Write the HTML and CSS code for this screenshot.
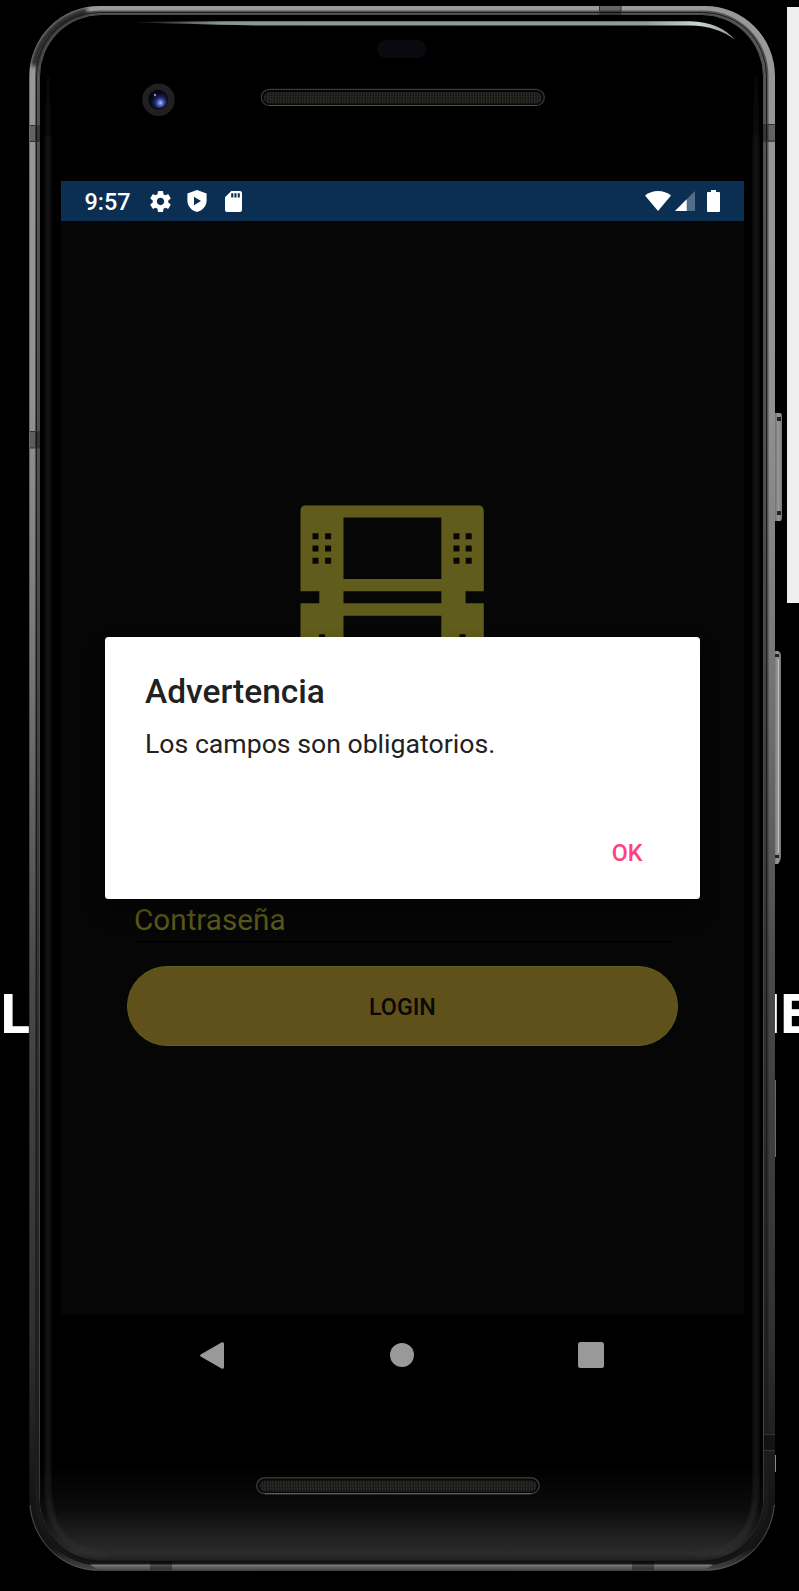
FILE: index.html
```html
<!DOCTYPE html>
<html lang="es">
<head>
<meta charset="utf-8">
<title>Login</title>
<link rel="stylesheet" href="styles.css">
</head>
<body>
<div class="stage">
  <div class="side-panel"></div>
  <span class="backdrop-text backdrop-left">L</span>
  <span class="backdrop-text backdrop-right">IE</span>

  <svg class="hardware" width="799" height="1591" viewBox="0 0 799 1591" aria-hidden="true">
    <defs>
      <linearGradient id="rail" gradientUnits="userSpaceOnUse" x1="0" y1="6" x2="0" y2="1571">
        <stop offset="0" stop-color="#999"/><stop offset=".25" stop-color="#929292"/>
        <stop offset=".42" stop-color="#777"/><stop offset=".62" stop-color="#494949"/>
        <stop offset=".85" stop-color="#303030"/><stop offset=".955" stop-color="#151515"/>
        <stop offset=".985" stop-color="#141414"/><stop offset="1" stop-color="#484848"/>
      </linearGradient>
      <linearGradient id="railInner" gradientUnits="userSpaceOnUse" x1="0" y1="6" x2="0" y2="1571">
        <stop offset="0" stop-color="#555"/><stop offset=".3" stop-color="#505050"/>
        <stop offset=".65" stop-color="#303030"/><stop offset=".95" stop-color="#1a1a1a"/><stop offset="1" stop-color="#111"/>
      </linearGradient>
      <linearGradient id="innerEdge" gradientUnits="userSpaceOnUse" x1="0" y1="6" x2="0" y2="1571">
        <stop offset="0" stop-color="#505050"/><stop offset=".9" stop-color="#444"/>
        <stop offset=".97" stop-color="#2e2e2e"/><stop offset="1" stop-color="#111"/>
      </linearGradient>
      <linearGradient id="glow" gradientUnits="userSpaceOnUse" x1="0" y1="1465" x2="0" y2="1560">
        <stop offset="0" stop-color="#000"/><stop offset=".45" stop-color="#0b0b0b"/>
        <stop offset=".93" stop-color="#2c2c2c"/><stop offset="1" stop-color="#202020"/>
      </linearGradient>
      <linearGradient id="sideGlow" gradientUnits="userSpaceOnUse" x1="0" y1="60" x2="0" y2="1560">
        <stop offset="0" stop-color="#1c1c1c" stop-opacity="0"/><stop offset=".06" stop-color="#1c1c1c"/>
        <stop offset=".93" stop-color="#1c1c1c"/><stop offset="1" stop-color="#303030"/>
      </linearGradient>
      <linearGradient id="shine" x1="0" x2="1">
        <stop offset="0" stop-color="#8b9696" stop-opacity="0"/><stop offset=".15" stop-color="#8b9696"/>
        <stop offset=".85" stop-color="#929b9b"/><stop offset=".94" stop-color="#cdd4d4"/><stop offset="1" stop-color="#8b9696"/>
      </linearGradient>
      <linearGradient id="key" x1="0" x2="1">
        <stop offset="0" stop-color="#666"/><stop offset=".55" stop-color="#989898"/><stop offset="1" stop-color="#777"/>
      </linearGradient>
      <linearGradient id="bottomRail" x1="0" x2="0" y1="0" y2="1">
        <stop offset="0" stop-color="#858585"/><stop offset=".5" stop-color="#5c5c5c"/><stop offset="1" stop-color="#474747"/>
      </linearGradient>
      <pattern id="mesh" width="2.670" height="3" patternUnits="userSpaceOnUse">
        <rect width="2.670" height="3" fill="#131210"/><rect width="1.300" height="3" fill="#2b2926"/><rect width="1.300" height="1.300" fill="#35322c"/>
      </pattern>
      <radialGradient id="lens" cx=".62" cy=".68" r=".6">
        <stop offset="0" stop-color="#b9c2ff"/><stop offset=".25" stop-color="#5b68c4"/>
        <stop offset=".55" stop-color="#1c2360"/><stop offset="1" stop-color="#06070f"/>
      </radialGradient>
      <filter id="soft" filterUnits="userSpaceOnUse" x="0" y="0" width="799" height="1591"><feGaussianBlur stdDeviation="2"/></filter>
      <clipPath id="face"><rect x="40" y="15.500" width="723" height="1545" rx="61"/></clipPath>
    </defs>

    <!-- side keys -->
    <path d="M774 413h6q2 0 2 3v102q0 3-2 3h-6z" fill="url(#key)"/>
    <path d="M777 417h4v4h-4zM777 511h4v4h-4z" fill="#222"/>
    <path d="M773 651h5q3 1 3 5v199q0 6-3 9h-5z" fill="url(#key)"/>
    <path d="M774 654h5v3h-5zM774 855h5v3h-5z" fill="#222"/>
    <path d="M778.500 659v194" stroke="#bbb"/>
    <path d="M775.300 1080v77M775.500 1455v17" stroke="#888" stroke-width="1"/>

    <!-- metal frame -->
    <rect x="29.300" y="6" width="745.700" height="1564.700" rx="70" fill="url(#rail)"/>
    <rect x="35" y="10.500" width="733.500" height="1555" rx="65" fill="url(#railInner)"/>
    <path d="M34 66C38 40 57 18 87 11" fill="none" stroke="#161616" stroke-width="6" filter="url(#soft)"/>
    <rect x="36.500" y="12.500" width="730" height="1551" rx="63" fill="none" stroke="#1c1c1c"/>
    <rect x="39.500" y="14.500" width="724" height="1546" rx="62" fill="#000" stroke="url(#innerEdge)" stroke-width="1"/>
    <path d="M90 1564.500H713L704 1570.500H99z" fill="url(#bottomRail)"/>
    <path d="M30 1505C33 1541 62 1570 97 1570.300M774.300 1505C771 1541 743 1570 706 1570.300" fill="none" stroke="#666" stroke-width=".7"/>

    <!-- antenna bands -->
    <g fill="#000" fill-opacity=".34">
      <path d="M30 125h10v17H30zM30 431h10v17H30zM763 124h12v18h-12zM599 6h22v9h-22zM150 1561h22v9h-22zM632 1561h22v9h-22zM764 1434h11v16h-11z"/>
    </g>
    <path d="M30 125.500h10M30 141.500h10M30 431.500h10M30 448h10M763 124.500h12M763 141h12M599.500 6v9M621 6v9M764 1434.500h11M764 1450.500h11" stroke="#333"/>

    <!-- glass front -->
    <g clip-path="url(#face)">
      <rect x="40" y="1465" width="723" height="96" fill="url(#glow)"/>
      <path d="M48 60V1490Q50 1553 108 1555M756 60V1490Q754 1553 696 1555" fill="none" stroke="url(#sideGlow)" stroke-width="4" filter="url(#soft)"/>
    </g>
    <path d="M128 22.300Q180 21 260 21.300H690Q720 22 735 40Q718 26 690 25.500H260Q180 24 128 22.300z" fill="url(#shine)"/>

    <!-- sensors and speakers -->
    <rect x="377" y="40" width="49.500" height="18" rx="9" fill="#090a0f"/>
    <circle cx="158.500" cy="99.700" r="16.300" fill="#211f20"/>
    <circle cx="158" cy="99.500" r="9.800" fill="#08090f"/>
    <circle cx="158.500" cy="99.800" r="8.500" fill="url(#lens)"/>
    <circle cx="155" cy="95" r="1.200" fill="#7d8de0"/>
    <g>
      <rect x="261.300" y="89.300" width="283" height="16.200" rx="8.100" fill="#070707" stroke="#3b3938" stroke-width="1.200"/>
      <rect x="264" y="92" width="278" height="11.500" rx="5.700" fill="url(#mesh)"/>
      <path d="M269 105.500H537" stroke="#555150"/>
    </g>
    <g>
      <rect x="256.700" y="1477.900" width="282.500" height="15.800" rx="7.900" fill="#070707" stroke="#444240" stroke-width="1.200"/>
      <rect x="259.500" y="1480.500" width="277" height="11" rx="5.500" fill="url(#mesh)"/>
      <path d="M265 1493.700H531" stroke="#69645f"/>
    </g>
  </svg>

  <main class="screen">
    <header class="status-bar">
      <span class="clock">9:57</span>
      <svg class="icon-gear" viewBox="0 0 24 24"><path d="M19.430 12.980c.04-.32.07-.64.07-.98s-.03-.66-.07-.98l2.110-1.650c.19-.15.24-.42.12-.64l-2-3.460c-.12-.22-.39-.3-.61-.22l-2.490 1c-.52-.4-1.080-.73-1.690-.98l-.38-2.650C14.460 2.180 14.250 2 14 2h-4c-.25 0-.46.18-.49.42l-.38 2.650c-.61.25-1.170.59-1.690.98l-2.490-1c-.23-.09-.49 0-.61.22l-2 3.460c-.13.22-.07.49.12.64l2.110 1.650c-.04.32-.07.65-.07.98s.03.66.07.98l-2.110 1.650c-.19.15-.24.42-.12.64l2 3.460c.12.22.39.3.61.22l2.490-1c.52.4 1.080.73 1.690.98l.38 2.650c.03.24.24.42.49.42h4c.25 0 .46-.18.49-.42l.38-2.650c.61-.25 1.170-.59 1.690-.98l2.490 1c.23.09.49 0 .61-.22l2-3.460c.12-.22.07-.49-.12-.64l-2.110-1.650zM12 15.500c-1.930 0-3.500-1.570-3.500-3.500s1.570-3.500 3.500-3.500 3.500 1.570 3.500 3.500-1.570 3.500-3.500 3.500z"/></svg>
      <svg class="icon-shield" viewBox="0 0 20 22"><path fill-rule="evenodd" d="M10 0 19.600 3.600V10.500C19.600 16 15.500 20.700 10 22C4.500 20.700.4 16 .4 10.500V3.600zM7 6.800V15.200L14 11z"/></svg>
      <svg class="icon-sd" viewBox="0 0 17 21"><path fill-rule="evenodd" d="M6.300 0H15Q17 0 17 2V19Q17 21 15 21H2Q0 21 0 19V6.300zM6.200 2.200V6.500H8.300V2.200zM9.400 2.200V6.500H11.500V2.200zM12.700 2.200V6.500H14.800V2.200z"/></svg>
      <span class="spacer"></span>
      <svg class="icon-wifi" viewBox="0 0 26 20"><path d="M0 4.600Q5.500 0 13 0T26 4.600L13 20z"/></svg>
      <svg class="icon-signal" viewBox="0 0 20 20"><path d="M20 0V20H0z" fill-opacity=".3"/><path d="M11.700 8.300V20H0z"/></svg>
      <svg class="icon-battery" viewBox="0 0 13 22"><path d="M4 0H9V2H12Q13 2 13 3V21Q13 22 12 22H1Q0 22 0 21V3Q0 2 1 2H4z"/></svg>
    </header>

    <section class="app">
      <svg class="logo" viewBox="0 0 184 150" width="184" height="150" aria-label="Logo">
        <path fill-rule="evenodd" d="M6 0H177.500Q183.500 0 183.500 6V86H165.300V98H183.500V150H0V98H19V86H0V6Q0 0 6 0zM43.200 12.200V73.700H141V12.200zM43.200 86V98H141V86zM43.200 110.500V150H141V110.500zM12.200 28h6v6h-6zM24.800 28h6v6h-6zM12.200 40.200h6v6h-6zM24.800 40.200h6v6h-6zM12.200 52.400h6v6h-6zM24.800 52.400h6v6h-6zM153.200 28h6v6h-6zM165.400 28h6v6h-6zM153.200 40.200h6v6h-6zM165.400 40.200h6v6h-6zM153.200 52.400h6v6h-6zM165.400 52.400h6v6h-6zM18.800 129h6v6h-6zM159.200 129h6v6h-6z"/>
      </svg>
      <form class="login-form">
        <div class="field">Contraseña</div>
        <button class="login" type="button">LOGIN</button>
      </form>
      <div class="dialog" role="alertdialog">
        <h1 class="dialog-title">Advertencia</h1>
        <p class="dialog-text">Los campos son obligatorios.</p>
        <button class="dialog-action" type="button">OK</button>
      </div>
    </section>

    <nav class="nav-bar">
      <svg width="24" height="27" viewBox="0 0 24 27"><path d="M1 12.200Q-.8 13.500 1 14.800L21.500 26.600Q24 27.500 24 25V2Q24-.5 21.500.4z"/></svg>
      <svg class="home" width="24" height="24" viewBox="0 0 24 24"><circle cx="12" cy="12" r="12"/></svg>
      <svg width="26" height="26" viewBox="0 0 26 26"><rect width="26" height="26" rx="2.500"/></svg>
    </nav>
  </main>
</div>
</body>
</html>
```
FILE: styles.css
```css
* { box-sizing: border-box; }
body { margin: 0; background: #000; font-family: Roboto, sans-serif; }
.stage {
  position: relative;
  width: 799px;
  height: 1591px;
  padding: 181px 55px 0 61px;
  overflow: hidden;
  background: #000;
}
.side-panel {
  position: absolute;
  top: 7px;
  right: 0;
  width: 12px;
  height: 596px;
  background: #efefef;
}
.backdrop-text {
  position: absolute;
  top: 977px;
  color: #fff;
  font: 700 53px/72px "Open Sans", sans-serif;
  filter: blur(.6px);
}
.backdrop-left { left: -1px; transform: scaleX(1.06); transform-origin: 0 50%; }
.backdrop-right { left: 764px; letter-spacing: -2.500px; white-space: nowrap; }
.hardware { position: absolute; inset: 0; }

.screen { position: relative; width: 683px; }
.status-bar {
  display: flex;
  align-items: center;
  height: 40px;
  padding: 0 24px 0 23.500px;
  background: #0a2f53;
  color: #fff;
}
.status-bar svg { display: block; flex: none; fill: #fff; }
.clock { width: 63.500px; font-size: 23.400px; font-weight: 500; line-height: 40px; padding-top: 1px; }
.icon-gear { width: 25px; height: 25px; }
.icon-shield { width: 20px; height: 22px; margin-left: 14px; }
.icon-sd { width: 17px; height: 21px; margin-left: 18px; }
.spacer { flex: 1; }
.icon-wifi { width: 26px; height: 20px; margin-right: 4px; }
.icon-signal { width: 20px; height: 20px; margin-right: 12px; }
.icon-battery { width: 13px; height: 22px; }

.app { position: relative; height: 1094px; padding-top: 284px; background: #060606; }
.logo { display: block; margin-left: 239px; transform: translate(.3px, .3px); fill: #605c1b; }
.login-form { margin: 239px 66.200px 0; }
.field {
  height: 49px;
  margin: 0 6.800px 23px;
  border-bottom: 2px solid #020202;
  color: #5c591b;
  font-size: 29.700px;
  line-height: 52px;
}
.login {
  display: block;
  width: 550.500px;
  height: 80px;
  border: 1.500px solid #605f1b;
  border-radius: 40px;
  padding: 4px 0 0;
  background: #60511b;
  color: #080804;
  font: 500 23.300px/1 Roboto, sans-serif;
}
.dialog {
  position: absolute;
  top: 416.300px;
  left: 44px;
  display: flex;
  flex-direction: column;
  width: 595px;
  height: 261.300px;
  padding: 34.400px 40px 30px;
  border-radius: 3.500px;
  background: #fff;
  color: #212121;
  box-shadow: 0 12px 20px rgba(0, 0, 0, .4);
}
.dialog-title { margin: 0; font-size: 33.500px; font-weight: 500; line-height: 40px; }
.dialog-text { margin: 14.800px 0 0; font-size: 26.650px; line-height: 36px; }
.dialog-action {
  align-self: flex-end;
  margin: auto 17.500px 0 0;
  padding: 0;
  border: 0;
  background: none;
  color: #ff4081;
  font: 500 23.300px/32px Roboto, sans-serif;
}
.nav-bar {
  display: flex;
  align-items: center;
  justify-content: space-between;
  height: 80px;
  padding: 0 140px 0 139px;
}
.nav-bar svg { display: block; fill: #999; }
.nav-bar .home { margin-left: 2px; }
```
